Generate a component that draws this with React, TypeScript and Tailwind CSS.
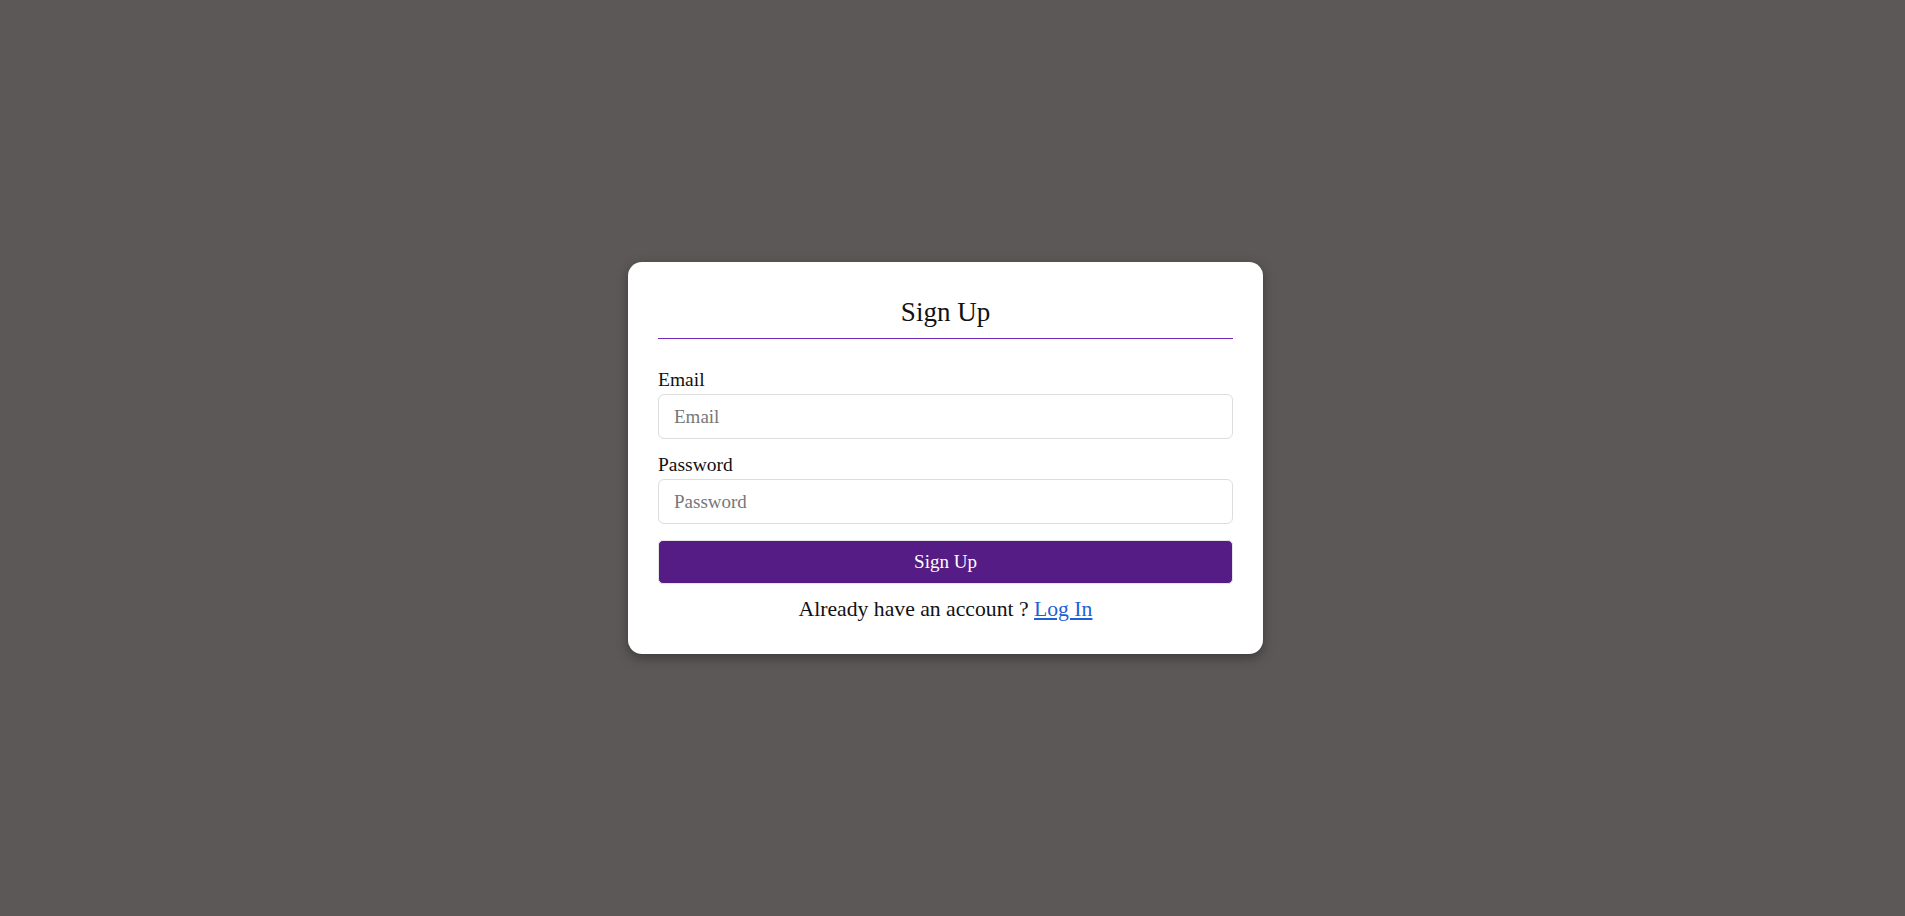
import React from "react";

export default function App() {
  const font = { fontFamily: '"Liberation Serif", Georgia, serif' };
  return (
    <div
      className="min-h-screen w-full bg-[#5c5858] flex items-center justify-center pr-[14px]"
      style={font}
    >
      <div className="w-[635px] bg-white rounded-[14px] px-[30px] pt-[35px] pb-[32px] shadow-[0_4px_12px_rgba(0,0,0,0.35)]">
        <h2 className="text-center text-[27px] leading-[30px] text-[#111] pb-[11px] border-b border-[#7229c0]">
          Sign Up
        </h2>
        <form className="flex flex-col" onSubmit={(e) => e.preventDefault()}>
          <label className="mt-[29px] text-[19.5px] leading-[24px] text-[#111]">Email</label>
          <input
            type="email"
            placeholder="Email"
            className="mt-[2px] h-[45px] w-full rounded-[6px] border border-[#dddddd] px-[15px] text-[19px] text-[#333] placeholder:text-[#777] outline-none"
          />
          <label className="mt-[14px] text-[19.5px] leading-[24px] text-[#111]">Password</label>
          <input
            type="password"
            placeholder="Password"
            className="mt-[2px] h-[45px] w-full rounded-[6px] border border-[#dddddd] px-[15px] text-[19px] text-[#333] placeholder:text-[#777] outline-none"
          />
          <button
            type="submit"
            className="mt-[16px] h-[44px] w-full rounded-[5px] bg-[#561c85] text-white text-[19px] border border-[#e5e5e5]"
          >
            Sign Up
          </button>
          <p className="mt-[12px] text-center text-[21.7px] leading-[26px] text-[#111]">
            Already have an account ?{" "}
            <a href="#" className="text-[#1f5fd6] underline">
              Log In
            </a>
          </p>
        </form>
      </div>
    </div>
  );
}
